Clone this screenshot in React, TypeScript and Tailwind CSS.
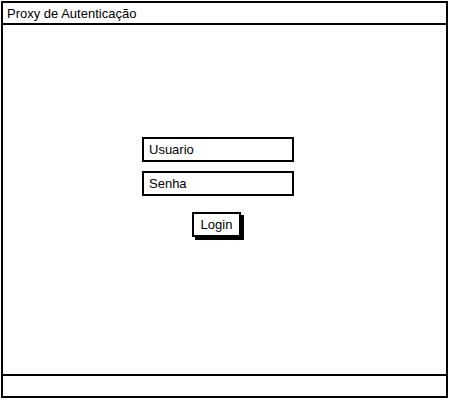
import React from 'react';

const App: React.FC = () => {
  return (
    <div className="w-[450px] h-[400px] bg-white p-px" style={{ fontFamily: '"Liberation Sans", Arial, sans-serif' }}>
      <div className="w-[447px] h-[397px] border-2 border-black flex flex-col text-black">
        {/* Header */}
        <div className="h-[22px] border-b-2 border-black flex items-center pl-[4px] text-[13px] leading-none">
          Proxy de Autenticação
        </div>

        {/* Body */}
        <div className="flex-1 flex flex-col pl-[139px] pt-[112px]">
          <div className="w-[152px] h-[25px] border-2 border-black flex items-center pl-[5px] text-[13px]">
            Usuario
          </div>
          <div className="w-[152px] h-[25px] mt-[9px] border-2 border-black flex items-center pl-[5px] text-[13px]">
            Senha
          </div>
          <div className="ml-[50px] mt-[16px]">
            <button className="w-[49px] h-[25px] border-2 border-black bg-white text-[13px] shadow-[3px_3px_0_#000] flex items-center justify-center">
              Login
            </button>
          </div>
        </div>

        {/* Footer */}
        <div className="h-[22px] border-t-2 border-black" />
      </div>
    </div>
  );
};

export default App;
